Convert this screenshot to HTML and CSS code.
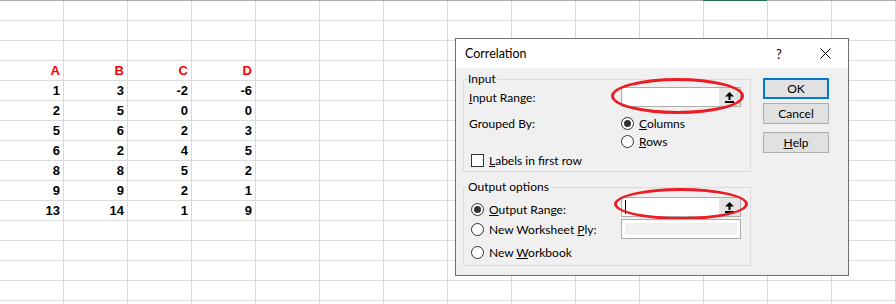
FILE: index.html
```html
<!DOCTYPE html>
<html>
<head>
<meta charset="utf-8">
<link rel="stylesheet" href="styles.css">
</head>
<body>
<div class="sheet">
  <div class="data">
    <div class="cell hdr">A</div><div class="cell hdr">B</div><div class="cell hdr">C</div><div class="cell hdr">D</div>
    <div class="cell">1</div><div class="cell">3</div><div class="cell">-2</div><div class="cell">-6</div>
    <div class="cell">2</div><div class="cell">5</div><div class="cell">0</div><div class="cell">0</div>
    <div class="cell">5</div><div class="cell">6</div><div class="cell">2</div><div class="cell">3</div>
    <div class="cell">6</div><div class="cell">2</div><div class="cell">4</div><div class="cell">5</div>
    <div class="cell">8</div><div class="cell">8</div><div class="cell">5</div><div class="cell">2</div>
    <div class="cell">9</div><div class="cell">9</div><div class="cell">2</div><div class="cell">1</div>
    <div class="cell">13</div><div class="cell">14</div><div class="cell">1</div><div class="cell">9</div>
  </div>

  <div class="dialog">
    <div class="titlebar">
      <span class="title">Correlation</span>
      <span class="tbtn help-q">?</span>
      <span class="tbtn close">
        <svg width="11" height="11" viewBox="0 0 11 11"><path d="M0.5 0.5 L10.5 10.5 M10.5 0.5 L0.5 10.5" stroke="#000" stroke-width="1" fill="none"/></svg>
      </span>
    </div>
    <div class="body">
      <div class="groups">
        <div class="group g-input">
          <span class="legend">Input</span>
          <div class="grid">
            <div class="lbl r1"><u>I</u>nput Range:</div>
            <div class="field-wrap r1">
              <div class="field">
                <div class="ref-btn">
                  <svg width="9" height="11" viewBox="0 0 9 11"><path d="M4.5 0 L9 4.5 L5.5 4.5 L5.5 8 L3.5 8 L3.5 4.5 L0 4.5 Z" fill="#000"/><rect x="0" y="9" width="9" height="2" fill="#000"/></svg>
                </div>
              </div>
              <div class="ellipse e1"></div>
            </div>
            <div class="lbl r2">Grouped By:</div>
            <div class="opt r2"><span class="radio on"></span><span><u>C</u>olumns</span></div>
            <div class="r3 empty"></div>
            <div class="opt r3"><span class="radio"></span><span><u>R</u>ows</span></div>
          </div>
          <div class="opt chk-row"><span class="check"></span><span><u>L</u>abels in first row</span></div>
        </div>

        <div class="group g-output">
          <span class="legend">Output options</span>
          <div class="orow o1">
            <div class="opt olbl"><span class="radio on"></span><span><u>O</u>utput Range:</span></div>
            <div class="field-wrap">
              <div class="field">
                <span class="caret"></span>
                <div class="ref-btn">
                  <svg width="9" height="11" viewBox="0 0 9 11"><path d="M4.5 0 L9 4.5 L5.5 4.5 L5.5 8 L3.5 8 L3.5 4.5 L0 4.5 Z" fill="#000"/><rect x="0" y="9" width="9" height="2" fill="#000"/></svg>
                </div>
              </div>
              <div class="ellipse e2"></div>
            </div>
          </div>
          <div class="orow o2">
            <div class="opt olbl"><span class="radio"></span><span>New Worksheet <u>P</u>ly:</span></div>
            <div class="field disabled"></div>
          </div>
          <div class="orow o3">
            <div class="opt olbl"><span class="radio"></span><span>New <u>W</u>orkbook</span></div>
          </div>
        </div>
      </div>

      <div class="buttons">
        <div class="btn default">OK</div>
        <div class="btn">Cancel</div>
        <div class="btn btn-help"><u>H</u>elp</div>
      </div>
    </div>
  </div>
</div>
</body>
</html>
```

FILE: styles.css
```css
html, body {
  margin: 0;
  padding: 0;
  background: #fff;
  overflow: hidden;
}

.sheet {
  position: relative;
  width: 896px;
  height: 303px;
  border-top: 1px solid #ababab;
  background-color: #fff;
  background-image:
    linear-gradient(to right, transparent 63px, #dadada 63px),
    linear-gradient(to bottom, transparent 19px, #dadada 19px);
  background-size: 64px 100%, 100% 20px;
  font-family: "Liberation Sans", Arial, sans-serif;
}

.sheet::before {
  content: "";
  position: absolute;
  left: 703px;
  top: -1px;
  width: 64px;
  height: 1px;
  background: #217346;
}

.data {
  display: grid;
  grid-template-columns: repeat(4, 64px);
  grid-auto-rows: 20px;
  padding-top: 60px;
  width: 256px;
}

.cell {
  font-size: 13px;
  font-weight: bold;
  line-height: 19px;
  text-align: right;
  padding-right: 4px;
  color: #000;
}

.cell.hdr {
  color: #ff0000;
}

/* Dialog */
.dialog {
  position: absolute;
  left: 455px;
  top: 37px;
  width: 394px;
  height: 238px;
  box-sizing: border-box;
  border: 1px solid #6f6f6f;
  background: #f0f0f0;
  display: flex;
  flex-direction: column;
  font-family: Lato, "Segoe UI", sans-serif;
  font-size: 12px;
  color: #000;
}

.titlebar {
  height: 29px;
  background: #fff;
  display: flex;
  align-items: center;
  padding-left: 9px;
}

.title {
  flex: 1;
  font-size: 12.5px;
}

.tbtn {
  width: 46px;
  height: 29px;
  display: flex;
  align-items: center;
  justify-content: center;
}

.help-q {
  font-size: 13px;
}

.body {
  display: flex;
  align-items: flex-start;
  padding: 11px 0 0 7px;
}

.groups {
  display: flex;
  flex-direction: column;
}

.group {
  width: 288px;
  box-sizing: border-box;
  border: 1px solid #dcdcdc;
}

.g-input {
  height: 93px;
}

.g-output {
  height: 79px;
  margin-top: 15px;
}

.legend {
  display: block;
  width: fit-content;
  height: 16px;
  line-height: 16px;
  margin: -9px 0 0 3px;
  padding: 0 1px;
  background: #f0f0f0;
}

.grid {
  display: grid;
  grid-template-columns: 152px 120px;
  grid-template-rows: 20px 25px 18px;
  padding-left: 5px;
}

.grid .r2 {
  align-self: end;
}

.lbl {
  display: flex;
  align-items: center;
  height: 18px;
}

.lbl.r1 {
  height: 20px;
}

.field-wrap {
  position: relative;
  width: 120px;
  height: 20px;
}

.field {
  width: 120px;
  height: 20px;
  box-sizing: border-box;
  border: 1px solid #adadad;
  background: #fff;
  display: flex;
  justify-content: flex-end;
  align-items: stretch;
  position: relative;
}

.ref-btn {
  width: 21px;
  background: #e5e5e5;
  display: flex;
  align-items: center;
  justify-content: center;
}

.caret {
  width: 1px;
  height: 14px;
  background: #000;
  align-self: center;
  margin-right: auto;
  margin-left: 3px;
}

.field.disabled {
  background: #f0f0f0;
  box-shadow: inset 0 0 0 3px #fff;
}

.ellipse {
  position: absolute;
  box-sizing: border-box;
  border: 3px solid #ed1c24;
  border-radius: 50%;
}

.e1 {
  left: -10px;
  top: -9px;
  width: 133px;
  height: 36px;
}

.e2 {
  left: -7px;
  top: -9px;
  width: 134px;
  height: 32px;
}

.opt {
  display: flex;
  align-items: center;
  gap: 5px;
  height: 18px;
}

.radio {
  width: 13px;
  height: 13px;
  box-sizing: border-box;
  border: 1px solid #333;
  border-radius: 50%;
  background: #fff;
  display: flex;
  align-items: center;
  justify-content: center;
  flex: none;
}

.radio.on::after {
  content: "";
  width: 7px;
  height: 7px;
  border-radius: 50%;
  background: #333;
}

.check {
  width: 13px;
  height: 13px;
  box-sizing: border-box;
  border: 1px solid #333;
  background: #fff;
  flex: none;
}

.chk-row {
  margin: 1px 0 0 7px;
}

.orow {
  display: flex;
  align-items: center;
  padding-left: 7px;
}

.olbl {
  width: 150px;
}

.o1 {
  margin-top: 2px;
  height: 20px;
  align-items: flex-start;
}

.o1 .olbl {
  margin-top: 3px;
}

.o2 {
  margin-top: 2px;
  height: 20px;
}

.o3 {
  margin-top: 4px;
}

.buttons {
  display: flex;
  flex-direction: column;
  margin: -1px 0 0 12px;
}

.btn {
  width: 66px;
  height: 21px;
  box-sizing: border-box;
  border: 1px solid #adadad;
  background: #e1e1e1;
  display: flex;
  align-items: center;
  justify-content: center;
}

.btn.default {
  border: 2px solid #0078d7;
}

.btn + .btn {
  margin-top: 4px;
}

.btn.btn-help {
  margin-top: 8px;
}
```
